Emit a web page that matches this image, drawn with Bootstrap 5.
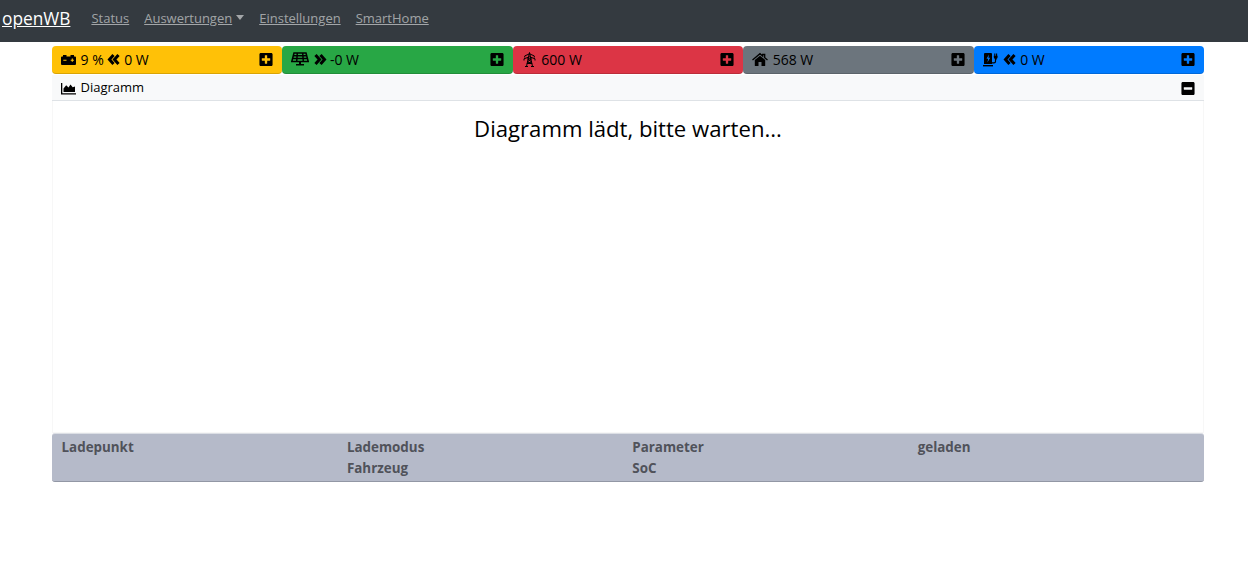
<!DOCTYPE html>
<html lang="de">
<head>
    <title>openWB</title>
    <link rel="stylesheet" href="https://cdn.jsdelivr.net/npm/bootstrap@5.3.0/dist/css/bootstrap.min.css">
    <style>
        body { font-family: "Open Sans", "Noto Sans", sans-serif; font-size: 14px; background: #fff; color: #000; }
        .top-bar { background: #343a40; height: 42px; padding: 0 2px 5px; }
        .top-bar .navbar-brand { color: #fff; font-size: 17.3px; text-decoration: underline; padding: 0; margin-right: 21px; }
        .top-bar .nav-link { color: rgba(255,255,255,.55); font-size: 13px; text-decoration: underline; padding: 0; margin-right: 15px; }
        .top-bar .dropdown-toggle::after { margin-left: 4px; border-top-width: 5px; border-left-width: 4px; border-right-width: 4px; vertical-align: 3px; }
        .page-wrap { width: 1152px; margin: 4px 0 0 52px; }
        .power-box { flex: 1 1 0; height: 28px; padding: 0 9px; border-radius: 4px; border-bottom: 1px solid rgba(0,0,0,.15); font-size: 14px; }
        .power-yellow { background: #ffc107; }
        .power-green { background: #28a745; }
        .power-red { background: #dc3545; }
        .power-grey { background: #6c757d; }
        .power-blue { background: #007bff; }
        .power-value { margin-left: 4.5px; white-space: pre; }
        .after-arrow { margin-left: 3px; }
        .ico { height: 15px; fill: #000; flex: none; }
        .ico-arrow { margin-left: 3.5px; }
        .ico-line { fill: none; stroke: #000; }
        .pm-btn { height: 15px; width: 14px; flex: none; margin-left: auto; fill: #000; }
        .diagram-head { background: #f8f9fa; height: 26px; margin-top: 1px; padding: 1px 9px 0; border-bottom: 1px solid #dee2e6; font-size: 13px; }
        .diagram-body { height: 332px; border: 1px solid #f7f7f7; border-top: 0; text-align: center; font-size: 22.15px; padding-top: 11px; line-height: 32px; }
        .lp-head { background: #b5bac9; height: 49px; border-radius: 3px; border-top: 1px solid #dcdfe5; border-bottom: 1px solid #9297a5; color: #50525a; font-weight: 700; font-size: 13.4px; padding: 3px 9.5px 0; }
        .lp-col { flex: 0 0 285.4px; line-height: 21px; }
    </style>
</head>
<body>
    <svg width="0" height="0" class="position-absolute">
        <symbol id="plus-sq" viewBox="0 0 448 512"><path d="M400 32H48C21.5 32 0 53.5 0 80v352c0 26.5 21.5 48 48 48h352c26.5 0 48-21.5 48-48V80c0-26.5-21.5-48-48-48zm-32 252c0 6.6-5.4 12-12 12h-92v92c0 6.6-5.4 12-12 12h-56c-6.6 0-12-5.4-12-12v-92H92c-6.6 0-12-5.4-12-12v-56c0-6.6 5.4-12 12-12h92v-92c0-6.6 5.4-12 12-12h56c6.6 0 12 5.4 12 12v92h92c6.6 0 12 5.4 12 12v56z"/></symbol>
        <symbol id="minus-sq" viewBox="0 0 448 512"><path d="M400 32H48C21.5 32 0 53.5 0 80v352c0 26.5 21.5 48 48 48h352c26.5 0 48-21.5 48-48V80c0-26.5-21.5-48-48-48zM92 296c-6.6 0-12-5.4-12-12v-56c0-6.600 5.4-12 12-12h264c6.6 0 12 5.4 12 12v56c0 6.6-5.4 12-12 12H92z"/></symbol>
        <symbol id="dbl-left" viewBox="0 0 14 14"><path d="M6.500 2.500 2.500 7l4 4.500M11.500 2.500 7.500 7l4 4.500" fill="none" stroke="#000" stroke-width="3"/></symbol>
        <symbol id="dbl-right" viewBox="0 0 14 14"><path d="M2.500 2.500 6.500 7l-4 4.500M7.500 2.500l4 4.500-4 4.500" fill="none" stroke="#000" stroke-width="3"/></symbol>
    </svg>

    <!--Navbar-->
    <nav class="navbar top-bar justify-content-start flex-nowrap">
        <a class="navbar-brand" href="#">openWB</a>
        <a class="nav-link" href="#">Status</a>
        <a class="nav-link dropdown-toggle" href="#">Auswertungen</a>
        <a class="nav-link" href="#">Einstellungen</a>
        <a class="nav-link" href="#">SmartHome</a>
    </nav>

    <div class="page-wrap">
        <!--Power overview-->
        <div class="d-flex">
            <div class="power-box power-yellow d-flex align-items-center">
                <svg class="ico" width="15" viewBox="0 0 15 15"><path d="M2 3h3.500v1.500h4V3H13v1.500h1a1 1 0 0 1 1 1V12a1 1 0 0 1-1 1H1a1 1 0 0 1-1-1V5.500a1 1 0 0 1 1-1h1z"/><path d="M2.300 8.200h3.200M9.700 8.200h3.200M11.300 6.600v3.200" stroke="#ffc107" stroke-width="1.100"/></svg>
                <span class="power-value">9 %</span>
                <svg class="ico ico-arrow" width="14"><use href="#dbl-left"/></svg>
                <span class="after-arrow">0 W</span>
                <svg class="pm-btn"><use href="#plus-sq"/></svg>
            </div>
            <div class="power-box power-green d-flex align-items-center">
                <svg class="ico" width="18" viewBox="0 0 18 15"><path d="M3 1h12l2.200 8.500H.8zM1.900 3.800h14.200M1.300 6.600h15.400M6.300 1l-.6 8.500M11.700 1l.6 8.500" class="ico-line" stroke-width="1.500"/><path d="M8 9.500h2V12h3v1.500H5V12h3z"/></svg>
                <svg class="ico ico-arrow" width="14"><use href="#dbl-right"/></svg>
                <span class="after-arrow">-0 W</span>
                <svg class="pm-btn"><use href="#plus-sq"/></svg>
            </div>
            <div class="power-box power-red d-flex align-items-center">
                <svg class="ico" width="15" viewBox="0 0 15 15"><path d="M7.500 .5 4.500 14.500M7.500 .5l3 14M3 14.500h3M9 14.500h3M3 3.800l4.500-2 4.500 2M2.700 3.800v1.700M12.300 3.800v1.700M2 6.800l5.500-2 5.500 2M2 6.800v1.700M13 6.800v1.700M5.800 6.800h3.400M5.400 9.800 9.600 6.800M9.600 9.800 5.400 6.800M4.900 11.500h5.200M5.400 9.800l4.700 1.700M9.600 9.800l-4.700 1.700" class="ico-line"/></svg>
                <span class="power-value">600 W</span>
                <svg class="pm-btn"><use href="#plus-sq"/></svg>
            </div>
            <div class="power-box power-grey d-flex align-items-center">
                <svg class="ico" width="16" viewBox="0 0 16 15"><path d="M8 3.700 2.800 8v5.500a.5.500 0 0 0 .5.500h3.200v-4h3v4h3.200a.5.500 0 0 0 .5-.5V8z"/><path d="M.5 8 8 1.700l2.700 2.300V2.500h2v3.200L15.500 8" class="ico-line" stroke-width="1.300"/></svg>
                <span class="power-value">568 W</span>
                <svg class="pm-btn"><use href="#plus-sq"/></svg>
            </div>
            <div class="power-box power-blue d-flex align-items-center">
                <svg class="ico" width="17" viewBox="0 0 17 15"><path d="M1 2a1 1 0 0 1 1-1h6a1 1 0 0 1 1 1v10H1z"/><path d="M0 13h10v1.400H0z"/><path d="m6 2.500-2.500 4.300h1.700L4.400 10.500l2.800-4.700H5.400z" fill="#007bff"/><path d="M9 10.800h2c1 0 1.500-.6 1.500-1.400V7" class="ico-line" stroke-width="1.200"/><path d="M10.800 3.800h3.800v1.500a1.900 1.900 0 0 1-1.200 1.700v1h-1.400V7a1.900 1.900 0 0 1-1.200-1.700z"/><path d="M11.800 1.500v2.500M13.600 1.500v2.500" class="ico-line" stroke-width="1.100"/></svg>
                <svg class="ico ico-arrow" width="14"><use href="#dbl-left"/></svg>
                <span class="after-arrow">0 W</span>
                <svg class="pm-btn"><use href="#plus-sq"/></svg>
            </div>
        </div>

        <!--Diagram-->
        <div class="diagram-head d-flex align-items-center">
            <svg class="ico" width="15" viewBox="0 0 15 15"><path d="M0 2h1.300v10.200H15v1.300H0z"/><path d="M2.500 11V7.500l2.700-3.300L7.500 6.500l2-3 2.200 2.700 2.300-.7V11z"/></svg>
            <span class="power-value">Diagramm</span>
            <svg class="pm-btn"><use href="#minus-sq"/></svg>
        </div>
        <div class="diagram-body">Diagramm lädt, bitte warten...</div>

        <!--Charge point header-->
        <div class="lp-head d-flex">
            <div class="lp-col">Ladepunkt</div>
            <div class="lp-col">Lademodus<br>Fahrzeug</div>
            <div class="lp-col">Parameter<br>SoC</div>
            <div class="lp-col">geladen</div>
        </div>
    </div>

    <script src="https://cdn.jsdelivr.net/npm/bootstrap@5.3.0/dist/js/bootstrap.bundle.min.js"></script>
</body>
</html>
